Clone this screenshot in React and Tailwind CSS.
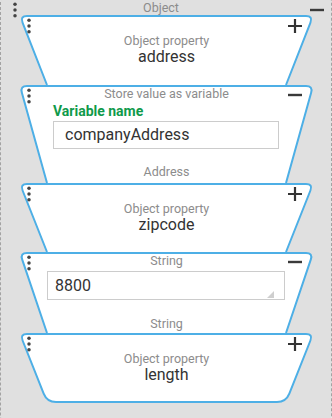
import React from "react";

const BLUE = "#4dafe6";

function shapePath(w, h, last) {
    const inset = 27;
    const r = 7;
    const ax = 1, ay = 1;
    const cx = w - 1;
    const by = last ? h - 1 : h;
    const bx = ax + inset, dx = cx - inset;
    const len = Math.hypot(inset, by - ay);
    const ux = inset / len, uy = (by - ay) / len;
    const p1 = [ax + ux * r, ay + uy * r];
    const p2 = [cx - ux * r, ay + uy * r];
    if (!last) {
        const stroke = `M${bx},${by} L${p1} Q${ax},${ay} ${ax + r},${ay} L${cx - r},${ay} Q${cx},${ay} ${p2} L${dx},${by}`;
        return {stroke, fill: stroke + " Z"};
    }
    const rb = 9;
    const b1 = [bx - ux * rb, by - uy * rb];
    const d1 = [dx + ux * rb, by - uy * rb];
    const d = `M${b1} Q${bx},${by} ${bx + rb},${by} L${dx - rb},${by} Q${dx},${by} ${d1} L${p2} Q${cx},${ay} ${cx - r},${ay} L${ax + r},${ay} Q${ax},${ay} ${p1} Z`;
    return {stroke: d, fill: d};
}

function Dots({className = ""}) {
    return (
        <svg width="6" height="16" viewBox="0 0 6 16" className={className}>
            <circle cx="3" cy="2.25" r="1.75" fill="#444"/>
            <circle cx="3" cy="8" r="1.75" fill="#444"/>
            <circle cx="3" cy="13.75" r="1.75" fill="#444"/>
        </svg>
    );
}

function Plus({className = ""}) {
    return (
        <svg width="14" height="14" viewBox="0 0 14 14" className={className}>
            <path d="M7 0V14M0 7H14" stroke="#333" strokeWidth="2.2"/>
        </svg>
    );
}

function Minus({className = ""}) {
    return (
        <svg width="14" height="14" viewBox="0 0 14 14" className={className}>
            <path d="M0 7H14" stroke="#3a3a3a" strokeWidth="2.4"/>
        </svg>
    );
}

function Card({h, last, className, children}) {
    const w = 295;
    const {stroke, fill} = shapePath(w, h, last);
    return (
        <div className={`relative w-[295px] ml-[18px] ${className}`}>
            <svg width={w} height={h} className="absolute inset-0 overflow-visible">
                <path d={fill} fill="#fff"/>
                <path d={stroke} fill="none" stroke={BLUE} strokeWidth="2"/>
            </svg>
            <div className="relative">{children}</div>
        </div>
    );
}

function TopRow({label, icon}) {
    return (
        <div className="grid grid-cols-[1fr_auto_1fr] items-start px-[9px] h-[19px]">
            <Dots className="justify-self-start -ml-[2px] mt-[3px]"/>
            <span className={`text-[12.5px] leading-[14px] text-[#8c8c8c] ${label ? "mt-[2px]" : ""}`}>{label}</span>
            {icon === "plus"
                ? <Plus className="justify-self-end mr-[3px] mt-[4px]"/>
                : <Minus className="justify-self-end mr-[3px] mt-[3px]"/>}
        </div>
    );
}

function PropertyCard({name, h, className, last}) {
    return (
        <Card h={h} last={last} className={className}>
            <TopRow icon="plus"/>
            <div className="flex flex-col items-center">
                <span className="text-[12.5px] leading-[14px] text-[#8c8c8c]">Object property</span>
                <span className="text-[16px] leading-[18px] text-[#333]">{name}</span>
            </div>
        </Card>
    );
}

export default function App() {
    return (
        <div className="w-[332px] h-[418px] overflow-hidden font-['Roboto',sans-serif]">
            <div className="-mt-[3px] h-[424px] border border-dashed border-[#a3a3a3] rounded-[5px] bg-[#e0e0e0] pt-[2px]">
                <div className="grid grid-cols-[1fr_auto_1fr] items-start px-[9px] h-[15px]">
                    <Dots className="justify-self-start ml-[2px] mt-[2px]"/>
                    <span className="text-[12.5px] leading-[14px] text-[#8c8c8c] mt-[1px] mr-[10px]">Object</span>
                    <Minus className="justify-self-end -mr-[2px] mt-[3px]"/>
                </div>

                <PropertyCard name="address" h={70} className="h-[70px]"/>

                <Card h={98} className="h-[98px]">
                    <TopRow label="Store value as variable" icon="minus"/>
                    <div className="px-[34px]">
                        <div className="text-[14px] leading-[15px] font-bold text-[#0f9a4b]">Variable name</div>
                        <div className="mt-[2px] w-[226px] h-[28px] border border-[#cccccc] bg-white flex items-center pl-[11px] text-[16px] text-[#333]">
                            companyAddress
                        </div>
                    </div>
                    <div className="mt-[16px] text-center text-[12.5px] leading-[14px] text-[#8c8c8c]">Address</div>
                </Card>

                <PropertyCard name="zipcode" h={69} className="h-[69px]"/>

                <Card h={81} className="h-[81px]">
                    <TopRow label="String" icon="minus"/>
                    <div className="relative ml-[28px] w-[238px] h-[29px] border border-[#cccccc] bg-white flex items-center pl-[7px] text-[16px] text-[#333]">
                        8800
                        <svg width="7" height="7" viewBox="0 0 7 7" className="absolute right-[10px] bottom-[1px]">
                            <path d="M7 0V7H0Z" fill="#cfcfcf"/>
                        </svg>
                    </div>
                    <div className="mt-[17px] text-center text-[12.5px] leading-[14px] text-[#8c8c8c]">String</div>
                </Card>

                <PropertyCard name="length" h={70} className="h-[70px]" last/>
            </div>
        </div>
    );
}
